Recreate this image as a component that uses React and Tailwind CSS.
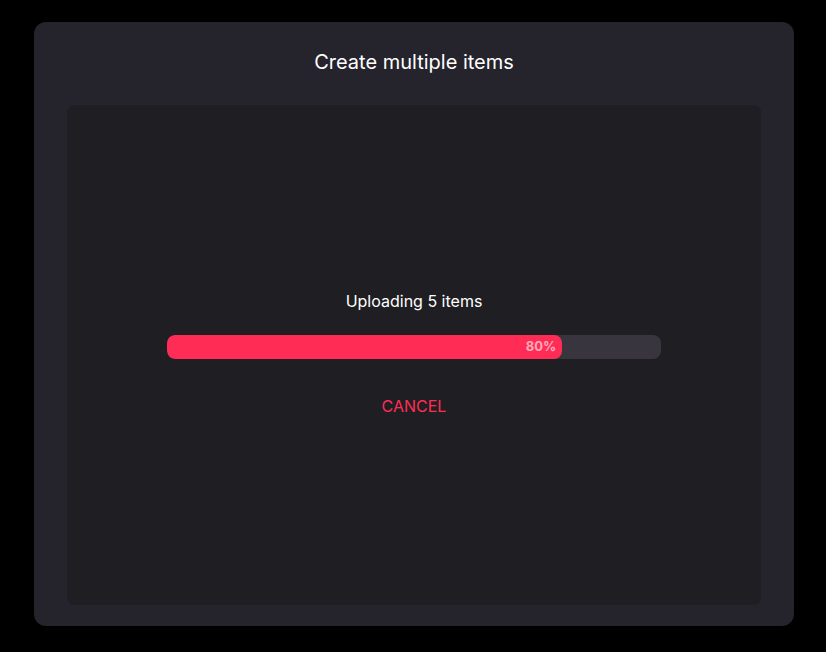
import React from 'react';

const progress = 80;

const App = () => {
  return (
    <div className="w-[826px] h-[652px] bg-black pt-[22px] pl-[34px]" style={{ fontFamily: 'Inter, "Liberation Sans", sans-serif' }}>
      <div className="w-[760px] h-[604px] bg-[#25232b] rounded-[12px] flex flex-col px-[33px] pt-[26px] pb-[21px]">
        <h2 className="text-[20px] leading-[28px] text-white text-center font-normal">Create multiple items</h2>

        <div className="mt-[29px] flex-1 bg-[#1f1e23] rounded-[8px] flex flex-col items-center justify-center pb-[4px]">
          <p className="text-[16px] leading-[24px] text-white">Uploading 5 items</p>

          {/* barra de progreso */}
          <div className="mt-[22px] w-[494px] h-[24px] bg-[#38353f] rounded-[8px] overflow-hidden">
            <div
              className="h-full bg-[#ff2d55] rounded-[8px] flex items-center justify-end pr-[6px]"
              style={{ width: `${progress}%` }}
            >
              <span className="text-[13px] font-bold text-white/60">{progress}%</span>
            </div>
          </div>

          <button type="button" className="mt-[35px] text-[16px] leading-[24px] text-[#ff2d55]">
            CANCEL
          </button>
        </div>
      </div>
    </div>
  );
};

export default App;
